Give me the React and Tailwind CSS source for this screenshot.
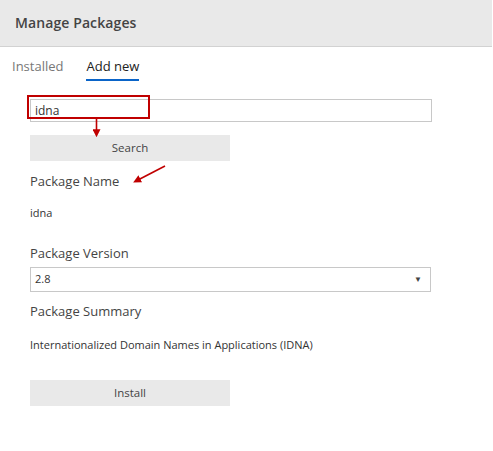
import React, { useState } from 'react';

function Arrow({ x1, y1, x2, y2 }) {
  return (
    <svg className="absolute left-0 top-0 pointer-events-none" width="493" height="451">
      <defs>
        <marker id={`h${x1}`} markerWidth="5" markerHeight="5" refX="3" refY="2.5" orient="auto">
          <path d="M0,0 L5,2.5 L0,5 Z" fill="#c00000" />
        </marker>
      </defs>
      <line x1={x1} y1={y1} x2={x2} y2={y2} stroke="#c00000" strokeWidth="1.6" markerEnd={`url(#h${x1})`} />
    </svg>
  );
}

function App() {
  const [query, setQuery] = useState('idna');
  const [tab, setTab] = useState('add');

  return (
    <div className="relative w-[493px] h-[451px] bg-white text-[#444] overflow-hidden" style={{ fontFamily: '"Open Sans", "Noto Sans", sans-serif' }}>
      <div className="w-[492px] h-[47px] bg-[#e9e9e9] border-b border-[#d2d2d2] flex items-center pl-[15px] pb-[2px]">
        <h1 className="text-[14px] font-semibold text-[#444] tracking-[0.1px]">Manage Packages</h1>
      </div>

      <div className="flex gap-[23px] pl-[12px] pt-[10px]">
        <button onClick={() => setTab('installed')} className={`text-[13px] pb-[2px] ${tab === 'installed' ? 'text-[#222] border-b-2 border-[#0a64c8]' : 'text-[#777] border-b-2 border-transparent'}`}>
          Installed
        </button>
        <button onClick={() => setTab('add')} className={`text-[13px] pb-[2px] ${tab === 'add' ? 'text-[#222] border-b-2 border-[#0a64c8]' : 'text-[#777] border-b-2 border-transparent'}`}>
          Add new
        </button>
      </div>

      <div className="pl-[30px] pt-[16px]">
        <div className="relative w-[402px] h-[23px]">
          <input
            value={query}
            onChange={(e) => setQuery(e.target.value)}
            className="w-full h-full border border-[#c8c8c8] pl-[4px] text-[12px] text-[#333] outline-none"
          />
          <div className="absolute left-[-3px] top-[-2px] w-[123px] h-[24px] border-2 border-[#c00000] pointer-events-none" />
        </div>

        <button className="mt-[15px] w-[200px] h-[26px] bg-[#e9e9e9] text-[11.5px] text-[#444] flex items-center justify-center">
          Search
        </button>

        <div className="mt-[10px] text-[13px] leading-[20px] text-[#444]">Package Name</div>
        <div className="mt-[14px] text-[11px] leading-[16px] text-[#333]">idna</div>

        <div className="mt-[22px] text-[13px] leading-[20px] text-[#444]">Package Version</div>
        <div className="mt-[4px] w-[401px] h-[25px] border border-[#c8c8c8] flex items-center justify-between pl-[4px] pr-[8px]">
          <span className="text-[11px] text-[#333]">2.8</span>
          <span className="text-[8px] text-[#444]">▼</span>
        </div>

        <div className="mt-[9px] text-[13px] leading-[20px] text-[#444]">Package Summary</div>
        <div className="mt-[16px] text-[11px] leading-[16px] text-[#333]">Internationalized Domain Names in Applications (IDNA)</div>

        <button className="mt-[27px] w-[200px] h-[26px] bg-[#e9e9e9] text-[11.5px] text-[#444] flex items-center justify-center">
          Install
        </button>
      </div>

      <Arrow x1={96.5} y1={119} x2={96.5} y2={134} />
      <Arrow x1={165} y1={166} x2={136} y2={181} />
    </div>
  );
}

export default App;
